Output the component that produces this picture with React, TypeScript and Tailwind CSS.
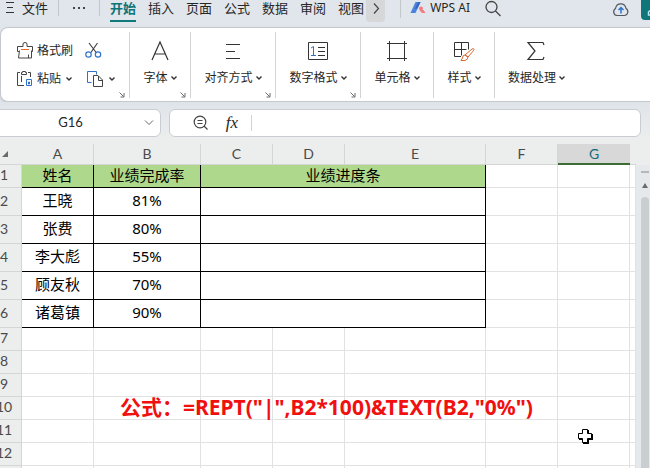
import { useState } from "react";
import type { ReactNode } from "react";

const MENUS = ["开始", "插入", "页面", "公式", "数据", "审阅", "视图"];

const COLUMNS = ["A", "B", "C", "D", "E", "F", "G"];

const ROWS = [
  { name: "王晓", rate: "81%" },
  { name: "张费", rate: "80%" },
  { name: "李大彪", rate: "55%" },
  { name: "顾友秋", rate: "70%" },
  { name: "诸葛镇", rate: "90%" },
];

const EMPTY_ROWS = [7, 8, 9, 10, 11, 12, 13];

export default function App() {
  return (
    <div className="h-screen overflow-hidden bg-[#e1e6ec] font-['Noto_Sans','Noto_Sans_CJK_SC',sans-serif] text-[#262626]">
      <div className="flex h-full flex-col">
        <MenuBar />
        <Ribbon />
        <FormulaBar />
        <div className="flex min-h-0 flex-1 bg-[#eceeed] pt-[7px]">
          <Sheet />
          <ScrollBar />
        </div>
      </div>
    </div>
  );
}

function MenuBar() {
  const [active, setActive] = useState("开始");

  return (
    <header className="flex h-[27px] shrink-0 items-start text-[13px] leading-4">
      <button type="button" className="flex h-4 items-center gap-2 pl-[6px]">
        <svg width="8" height="16" viewBox="0 0 8 16" stroke="#333" fill="none">
          <path d="M0 2.5h8M1 7.5h6M0 12.5h8" />
        </svg>
        文件
      </button>
      <span className="ml-[10px] h-4 w-px bg-[#c3c7cc]" />
      <button type="button" aria-label="更多" className="ml-[14px] h-4">
        <svg width="14" height="16" viewBox="0 0 14 16" fill="#444">
          <path d="M0 7h2v2H0zM5 7h2v2H5zM10 7h2v2h-2z" />
        </svg>
      </button>
      <span className="ml-3 h-4 w-px bg-[#c3c7cc]" />

      <nav className="ml-[10px] flex gap-3">
        {MENUS.map((menu) => (
          <button
            key={menu}
            type="button"
            onClick={() => setActive(menu)}
            className={
              menu === active
                ? "h-[22px] border-b-2 border-[#0f7a7c] pb-1 font-bold text-[#0f7478]"
                : "h-[22px] border-b-2 border-transparent pb-1"
            }
          >
            {menu}
          </button>
        ))}
      </nav>
      <button
        type="button"
        aria-label="下一页"
        className="ml-[2px] flex h-[22px] w-[19px] justify-center rounded-b bg-[#d6d7d9]"
      >
        <svg width="8" height="16" viewBox="0 0 8 16" fill="none" stroke="#444" strokeWidth="1.200">
          <path d="M2 3.5l4.5 5L2 13.5" />
        </svg>
      </button>

      <span className="ml-[15px] h-[18px] w-px bg-[#c3c7cc]" />
      <button type="button" className="ml-[9px] flex h-4 items-center gap-1 text-[12px]">
        <svg width="16" height="16" viewBox="0 0 16 16">
          <path d="M5.5 2h5L5.5 13H.5z" fill="#4b84dc" />
          <path d="M8 2h2.500l-3 6.500L5 9z" fill="#3566c4" />
          <circle cx="11" cy="8.500" r="2" fill="#f27a83" />
          <path d="M9.500 10h4L15.500 13H12z" fill="#f27a83" />
        </svg>
        WPS AI
      </button>
      <button type="button" aria-label="搜索" className="ml-[14px]">
        <svg width="18" height="17" viewBox="0 0 18 17" fill="none" stroke="#444" strokeWidth="1.300">
          <circle cx="7.500" cy="7" r="5.500" />
          <path d="M11.500 11l5 5" />
        </svg>
      </button>

      <div className="ml-auto flex gap-[11px]">
        <button type="button" aria-label="云同步">
          <svg width="18" height="16" viewBox="0 0 18 16" fill="none" stroke="#505860" strokeWidth="1.200">
            <path d="M5 13.500a3.800 3.800 0 0 1-1.500-7C4 3.500 6 1.800 8.800 1.800S13.500 3.500 14 6.500a3.800 3.800 0 0 1-1.200 7z" />
            <path d="M9 11.500V5.500M6.500 8L9 5.500 11.500 8" stroke="#2f73d0" strokeWidth="1.500" />
          </svg>
        </button>
        <button type="button" aria-label="分享" className="h-5 w-[9px] overflow-hidden rounded-bl bg-[#10767a]">
          <svg width="9" height="20" viewBox="0 0 9 20" fill="none" stroke="#b5e6f3" strokeWidth="1.500">
            <path d="M9 10.500l-1.500 1.500v3h2" />
          </svg>
        </button>
      </div>
    </header>
  );
}

function Caret() {
  return (
    <svg width="6" height="4" viewBox="0 0 6 4" fill="none" stroke="#333" strokeWidth="1.400">
      <path d="M.5.500L3 3 5.500.500" />
    </svg>
  );
}

function Launcher() {
  return (
    <svg className="absolute right-1 bottom-0" width="6" height="6" viewBox="0 0 6 6" fill="none" stroke="#6a6a6a">
      <path d="M.5.500l4 4M1.500 5H5V1" />
    </svg>
  );
}

function RibbonGroup({
  label,
  className,
  launcher,
  children,
}: {
  label: string;
  className: string;
  launcher?: boolean;
  children: ReactNode;
}) {
  return (
    <div className={`relative flex shrink-0 justify-center border-[#d4d4d4] ${className}`}>
      <button type="button" className="flex flex-col items-center gap-2 pt-2">
        {children}
        <span className="flex items-center gap-[3px]">
          {label}
          <Caret />
        </span>
      </button>
      {launcher && <Launcher />}
    </div>
  );
}

function Ribbon() {
  return (
    <section className="-mr-3 shrink-0 rounded-lg border border-[#c4c8cc] bg-white pt-1 pb-[3px] text-[12px] leading-4 shadow-sm">
      <div className="flex h-[66px]">
        <div className="relative flex w-[129px] shrink-0 flex-col gap-[10px] border-r border-[#d4d4d4] pt-[10px] pl-4">
          <div className="flex h-[18px] items-center">
            <button type="button" className="flex w-[67px] items-center gap-[3px]">
              <svg width="17" height="18" viewBox="0 0 17 18" fill="none" stroke="#444">
                <path d="M2 9.500H.5V4.500h5.500V2q0-1.500 2-1.500T10 2v2.500h5.500v5H14M2.500 8.500l-1 7.500h13V8.500M11.500 12.500v3.500" />
                <path d="M4 7.500h8" stroke="#e56a2c" />
              </svg>
              格式刷
            </button>
            <button type="button" aria-label="剪切" className="ml-px">
              <svg width="17" height="18" viewBox="0 0 17 18" fill="none" stroke="#444" strokeWidth="1.200">
                <path d="M4 1l7.500 10M12.500 1L5.500 11" />
                <circle cx="3.500" cy="12.500" r="2.700" stroke="#2f73c8" />
                <circle cx="13" cy="12.500" r="2.700" stroke="#2f73c8" />
              </svg>
            </button>
          </div>
          <div className="flex h-[18px] items-center">
            <button type="button" className="flex w-[70px] items-center gap-[3px]">
              <svg width="17" height="18" viewBox="0 0 17 18" fill="none" stroke="#444">
                <path d="M3 2.500H.5v13H7M11 2.500h2.500V7" />
                <path d="M4.500 2.500h1v-1h3v1h1v2h-5zM4.500 6v6" />
                <path d="M9.500 9.500v6h5v-6zM11.500 12v2h1v-2z" stroke="#2f73c8" />
              </svg>
              <span className="pr-[2px]">粘贴</span>
              <Caret />
            </button>
            <button type="button" aria-label="复制" className="flex items-center gap-[5px]">
              <svg width="17" height="18" viewBox="0 0 17 18" fill="none" stroke="#444">
                <path d="M4.500 12.500h-4v-11h9v3" stroke="#2f73c8" />
                <path d="M6.500 5.500h4.500l4.500 4.500v6.500h-9zM11.500 6v4.500h4" />
              </svg>
              <Caret />
            </button>
          </div>
          <Launcher />
        </div>

        <RibbonGroup label="字体" className="w-[61px] border-r" launcher>
          <svg width="20" height="22" viewBox="0 0 20 22" fill="none" stroke="#333" strokeWidth="1.200">
            <path d="M2 20L10 2l8 18M5 14h10" />
          </svg>
        </RibbonGroup>
        <RibbonGroup label="对齐方式" className="w-[85px] border-r" launcher>
          <svg width="20" height="22" viewBox="0 0 20 22" fill="none" stroke="#333">
            <path d="M3 4.500h14M3 11.500h9M3 18.500h14" />
          </svg>
        </RibbonGroup>
        <RibbonGroup label="数字格式" className="w-[85px] border-r" launcher>
          <svg width="20" height="22" viewBox="0 0 20 22" fill="none" stroke="#333">
            <path d="M.5 2.500h19v17H.5zM10 7.500h7M10 11.500h7M10 15.500h7" />
            <path d="M3 8l2.500-1.500v9M3 15.500h5" stroke="#2f73c8" />
          </svg>
        </RibbonGroup>
        <RibbonGroup label="单元格" className="w-[73px] border-r">
          <svg width="20" height="22" viewBox="0 0 20 22" fill="none" stroke="#333">
            <path d="M2.500 1v20M17.500 1v20M0 3.500h20M0 18.500h20" />
          </svg>
        </RibbonGroup>
        <RibbonGroup label="样式" className="w-[61px] border-r">
          <svg width="22" height="22" viewBox="0 0 22 22" fill="none" stroke="#333">
            <path d="M8 16.500H1.500v-14h14v7M1.500 9.500h12M8.500 2.500v13" />
            <path
              d="M12 15L19 9q2-1 2 .5 0 .8-6 7.500zM12 15q-2.500 0-2.500 3l-1.500 2.500h4q3-1 3-3.500z"
              stroke="#d9672c"
              fill="white"
            />
          </svg>
        </RibbonGroup>
        <RibbonGroup label="数据处理" className="w-[83px]">
          <svg width="20" height="22" viewBox="0 0 20 22" fill="none" stroke="#333" strokeWidth="1.200">
            <path d="M18 5l-1-2.500H2l7 8.500-7 8.500h15l1-2.500" />
          </svg>
        </RibbonGroup>
      </div>
    </section>
  );
}

function FormulaBar() {
  return (
    <div className="flex h-[35px] shrink-0 gap-2 bg-linear-to-b from-[#dfe4ea] to-[#eceeed] pt-[7px] pr-[9px]">
      <div className="-ml-2 flex w-[169px] items-center rounded-md border border-[#c9ccd0] bg-white pr-[6px] pl-1">
        <input
          aria-label="名称框"
          defaultValue="G16"
          className="min-w-0 flex-1 bg-transparent text-center font-['Lato',sans-serif] text-[13px] outline-none"
        />
        <button type="button" aria-label="展开名称框">
          <svg width="10" height="6" viewBox="0 0 10 6" fill="none" stroke="#666">
            <path d="M1 .5l4 4 4-4" />
          </svg>
        </button>
      </div>
      <div className="flex flex-1 items-center rounded-md border border-[#c9ccd0] bg-white pl-[23px]">
        <button type="button" aria-label="缩小">
          <svg width="16" height="16" viewBox="0 0 16 16" fill="none" stroke="#444" strokeWidth="1.200">
            <circle cx="7" cy="7" r="5.800" />
            <path d="M4.500 5.500h5M4.500 8.500h5M11 11l3.500 3.500" />
          </svg>
        </button>
        <button
          type="button"
          aria-label="插入函数"
          className="ml-4 w-[14px] font-['Liberation_Serif',serif] text-[17px] leading-5 italic"
        >
          fx
        </button>
        <span className="ml-3 h-4 w-px bg-[#d0d3d6]" />
        <input aria-label="编辑栏" className="min-w-0 flex-1 bg-transparent px-2 text-[13px] outline-none" />
      </div>
    </div>
  );
}

function RowHeader({ children }: { children: ReactNode }) {
  return (
    <th className="border-r border-b border-[#d3d6d5] bg-[#eceeed] p-0 pb-[2px] font-['Lato',sans-serif] text-[14px] font-normal text-[#4a4a4a]">
      {children}
    </th>
  );
}

function GridCells({ count }: { count: number }) {
  return Array.from({ length: count }, (_, i) => (
    <td key={i} className="border-r border-b border-[#e2e2e2] p-0" />
  ));
}

function Sheet() {
  return (
    <div className="relative min-w-0 flex-1 overflow-hidden">
      {/* the row headers are scrolled partly out of view */}
      <div className="-ml-[13px]">
        <table className="w-full table-fixed border-separate border-spacing-0 bg-white text-[15px] leading-5 text-black">
          <colgroup>
            <col className="w-[35px]" />
            <col className="w-[72px]" />
            <col className="w-[107px]" />
            <col className="w-[72px]" />
            <col className="w-[72px]" />
            <col className="w-[141px]" />
            <col className="w-[72px]" />
            <col className="w-[72px]" />
            <col />
          </colgroup>
          <thead>
            <tr className="h-[21px] bg-[#eceeed] font-['Lato',sans-serif] text-[14px] text-[#4a4a4a]">
              <th className="border-b border-[#d3d6d5] p-0">
                <svg className="ml-[15px]" width="6" height="6" viewBox="0 0 6 6" fill="#6b6b6b">
                  <path d="M6 0v6H0z" />
                </svg>
              </th>
              {COLUMNS.map((column) => (
                <th
                  key={column}
                  className={
                    column === "G"
                      ? "border-b-2 border-[#3d6b35] bg-[#d8d8d8] p-0 leading-[19px] font-normal text-[#16697d]"
                      : "border-r border-b border-[#d3d6d5] p-0 font-normal"
                  }
                >
                  {column}
                </th>
              ))}
              <th className="border-b border-[#d3d6d5] p-0" />
            </tr>
          </thead>
          <tbody>
            <tr className="h-[23px]">
              <RowHeader>1</RowHeader>
              <td className="border-r border-b border-black bg-[#aed88c] p-0 pb-[2px] text-center">姓名</td>
              <td className="border-r border-b border-black bg-[#aed88c] p-0 pb-[2px] text-center">业绩完成率</td>
              <td colSpan={3} className="border-r border-b border-black bg-[#aed88c] p-0 pb-[2px] text-center">
                业绩进度条
              </td>
              <GridCells count={3} />
            </tr>
            {ROWS.map((row, i) => (
              <tr key={row.name} className="h-7">
                <RowHeader>{i + 2}</RowHeader>
                <td className="border-r border-b border-black p-0 pb-[3px] text-center">{row.name}</td>
                <td className="border-r border-b border-black p-0 pb-[3px] text-center">{row.rate}</td>
                <td colSpan={3} className="border-r border-b border-black p-0" />
                <GridCells count={3} />
              </tr>
            ))}
            {EMPTY_ROWS.map((row) => (
              <tr key={row} className="h-[23px]">
                <RowHeader>{row}</RowHeader>
                <GridCells count={8} />
              </tr>
            ))}
          </tbody>
        </table>
      </div>

      <p className="absolute top-[249px] left-[120px] text-[21px] leading-7 font-bold whitespace-nowrap text-[#f01010]">
        公式：=REPT("|",B2*100)&amp;TEXT(B2,"0%")
      </p>

      <svg className="absolute top-[284px] left-[577px]" width="16" height="16" viewBox="0 0 16 16">
        <path d="M6 2h6v4h4v6h-4v4H6v-4H2V6h4z" fill="black" />
        <path d="M5.500 1.500h5v4h4v5h-4v4h-5v-4h-4v-5h4z" fill="white" stroke="black" />
      </svg>
    </div>
  );
}

function ScrollBar() {
  return (
    <div className="mt-[21px] flex w-[14px] shrink-0 flex-col items-center bg-[#e5e9ec] pt-[6px] pl-1">
      <span className="h-[2px] w-2 bg-[#b4b8bb]" />
      <svg className="mt-[10px]" width="6" height="5" viewBox="0 0 6 5" fill="#6b6b6b">
        <path d="M3 0l3 5H0z" />
      </svg>
      <span className="mt-[9px] w-2 flex-1 rounded-t bg-[#c9ced0]" />
    </div>
  );
}
